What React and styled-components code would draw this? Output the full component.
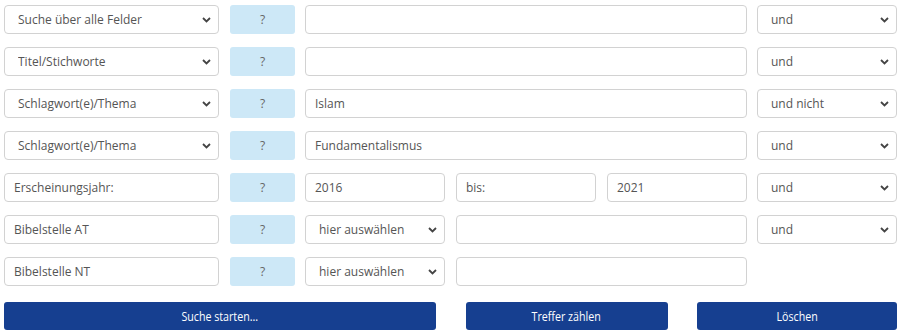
import React from "react";
import styled, { createGlobalStyle } from "styled-components";

const Global = createGlobalStyle`
  body { margin: 0; background: #fff; font-family: "Open Sans", "Segoe UI", sans-serif; }
  * { box-sizing: border-box; }
`;

const Page = styled.div`
  width: 901px;
  padding: 5px 4px 0 4px;
`;

const Rows = styled.div`
  display: grid;
  grid-template-columns: 216px 65px 442px 140px;
  column-gap: 10px;
  row-gap: 13px;
  width: 893px;
`;

const Row = styled.div`
  display: contents;
  & > :first-child {
    width: 215px;
  }
`;

const Split = styled.div`
  display: grid;
  grid-template-columns: ${(p) => p.$cols};
  column-gap: 11px;
`;

const fieldBase = `
  height: 29px;
  width: 100%;
  border: 1px solid #d2d2d2;
  border-radius: 4px;
  background: #fff;
  font-family: "Open Sans", "Segoe UI", sans-serif;
  font-size: 12px;
  color: #555;
  outline: none;
`;

const Input = styled.input`
  ${fieldBase}
  padding: 0 9px;
`;

const SelectWrap = styled.div`
  position: relative;
  width: 100%;
`;

const Select = styled.select`
  ${fieldBase}
  appearance: none;
  -webkit-appearance: none;
  padding: 0 28px 0 13px;
`;

const Chevron = styled.svg`
  position: absolute;
  right: 8px;
  top: 12px;
  width: 9px;
  height: 6px;
  pointer-events: none;
`;

const Help = styled.button`
  height: 29px;
  width: 100%;
  border: none;
  border-radius: 3px;
  background: #cde8f7;
  color: #666;
  font-family: "Open Sans", "Segoe UI", sans-serif;
  font-size: 12px;
  padding: 0;
`;

const Empty = styled.div``;

const Actions = styled.div`
  display: flex;
  justify-content: space-between;
  width: 893px;
  margin-top: 16px;
`;

const Action = styled.button`
  width: ${(p) => p.$w}px;
  height: 28px;
  border: none;
  border-radius: 3px;
  background: #163f90;
  color: #fff;
  font-family: "Open Sans", "Segoe UI", sans-serif;
  font-size: 13px;
  padding: 0;
  display: flex;
  align-items: center;
  justify-content: center;
`;

const Narrow = styled.span`
  display: inline-block;
  transform: scaleX(0.82);
`;

function Sel({ value, options }) {
  return (
    <SelectWrap>
      <Select defaultValue={value}>
        {options.map((o) => (
          <option key={o}>{o}</option>
        ))}
      </Select>
      <Chevron viewBox="0 0 9 6">
        <path d="M1 1 L4.5 4.5 L8 1" fill="none" stroke="#444" strokeWidth="1.8" />
      </Chevron>
    </SelectWrap>
  );
}

const fields = ["Suche über alle Felder", "Titel/Stichworte", "Schlagwort(e)/Thema"];
const ops = ["und", "oder", "und nicht"];

export default function App() {
  return (
    <Page>
      <Global />
      <Rows>
        <Row>
          <Sel value="Suche über alle Felder" options={fields} />
          <Help>?</Help>
          <Input defaultValue="" />
          <Sel value="und" options={ops} />
        </Row>
        <Row>
          <Sel value="Titel/Stichworte" options={fields} />
          <Help>?</Help>
          <Input defaultValue="" />
          <Sel value="und" options={ops} />
        </Row>
        <Row>
          <Sel value="Schlagwort(e)/Thema" options={fields} />
          <Help>?</Help>
          <Input defaultValue="Islam" />
          <Sel value="und nicht" options={ops} />
        </Row>
        <Row>
          <Sel value="Schlagwort(e)/Thema" options={fields} />
          <Help>?</Help>
          <Input defaultValue="Fundamentalismus" />
          <Sel value="und" options={ops} />
        </Row>
        <Row>
          <Input defaultValue="Erscheinungsjahr:" readOnly />
          <Help>?</Help>
          <Split $cols="140px 140px 140px">
            <Input defaultValue="2016" />
            <Input defaultValue="bis:" readOnly />
            <Input defaultValue="2021" />
          </Split>
          <Sel value="und" options={ops} />
        </Row>
        <Row>
          <Input defaultValue="Bibelstelle AT" readOnly />
          <Help>?</Help>
          <Split $cols="140px 291px">
            <Sel value="hier auswählen" options={["hier auswählen"]} />
            <Input defaultValue="" />
          </Split>
          <Sel value="und" options={ops} />
        </Row>
        <Row>
          <Input defaultValue="Bibelstelle NT" readOnly />
          <Help>?</Help>
          <Split $cols="140px 291px">
            <Sel value="hier auswählen" options={["hier auswählen"]} />
            <Input defaultValue="" />
          </Split>
          <Empty />
        </Row>
      </Rows>
      <Actions>
        <Action $w={432}><Narrow>Suche starten...</Narrow></Action>
        <Action $w={202}><Narrow>Treffer zählen</Narrow></Action>
        <Action $w={200}><Narrow>Löschen</Narrow></Action>
      </Actions>
    </Page>
  );
}
